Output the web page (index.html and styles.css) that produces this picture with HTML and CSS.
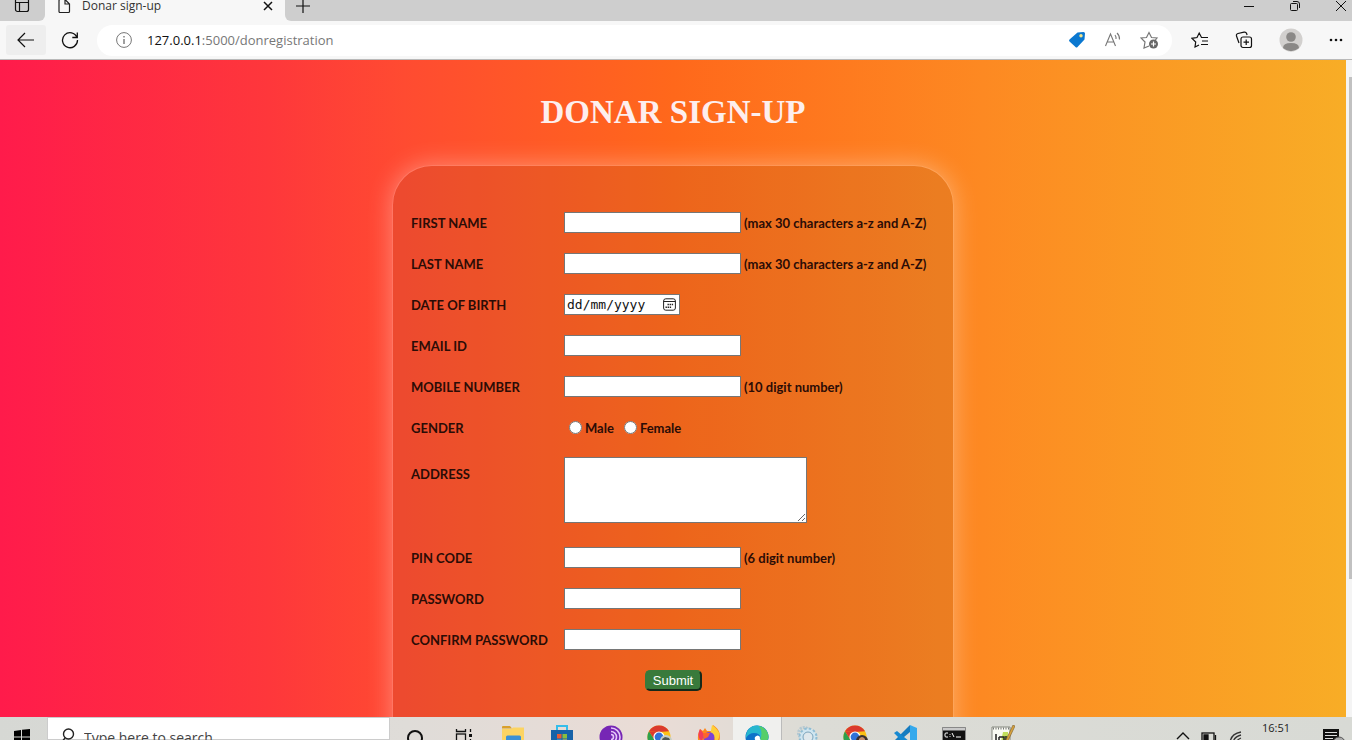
FILE: index.html
```html
<!DOCTYPE html>
<html lang="en">
<head>
<meta charset="utf-8">
<title>Donar sign-up</title>
<link rel="stylesheet" href="styles.css">
</head>
<body>
<svg class="defs" aria-hidden="true">
  <defs>
    <symbol id="chrome" viewBox="0 0 24 24">
      <circle cx="12" cy="12" r="11.500" fill="#fbc116"/>
      <path d="M2 6.200A11.500 11.500 0 0 1 22 6.200L12 7z" fill="#db3a2e"/>
      <path d="M2 6.200A11.500 11.500 0 0 0 11 23.500L15 16L7 14z" fill="#2da04e"/>
      <path d="M2 6.200L7 14L12 6.500z" fill="#db3a2e"/>
      <circle cx="12" cy="12" r="5.600" fill="#fff"/>
      <circle cx="12" cy="12" r="4.400" fill="#2f72d9"/>
    </symbol>
  </defs>
</svg>

<header class="browser">
  <div class="tabs">
    <button class="tab-actions" aria-label="Tab actions">
      <svg width="16" height="16" viewBox="0 0 16 16" fill="none" stroke="#111" stroke-width="1.200"><rect x="1.500" y="1.500" width="13" height="13" rx="2"/><path d="M1.500 5.500h13M5.500 5.500v9"/></svg>
    </button>
    <div class="tab">
      <svg width="14" height="16" viewBox="0 0 14 16" fill="none" stroke="#222" stroke-width="1.200"><path d="M3 1.500h5l4.500 4.500v7.500a1 1 0 0 1-1 1h-8.500a1 1 0 0 1-1-1v-11a1 1 0 0 1 1-1zM8 1.500v4.500h4.500"/></svg>
      <span class="tab-title">Donar sign-up</span>
      <button class="plain" aria-label="Close tab"><svg width="10" height="10" viewBox="0 0 10 10" stroke="#111" stroke-width="1.500"><path d="M1 1l8 8M9 1l-8 8"/></svg></button>
    </div>
    <div class="strip">
      <button class="plain" aria-label="New tab"><svg width="14" height="14" viewBox="0 0 14 14" stroke="#111" stroke-width="1.200"><path d="M7 0v14M0 7h14"/></svg></button>
      <div class="window">
        <button class="plain" aria-label="Minimize"><svg width="12" height="12" viewBox="0 0 12 12" stroke="#111"><path d="M1 6.500h10"/></svg></button>
        <button class="plain" aria-label="Restore"><svg width="12" height="12" viewBox="0 0 12 12" fill="none" stroke="#111"><rect x="1.500" y="3.500" width="7" height="7" rx="1"/><path d="M4 1.500h4a2.500 2.500 0 0 1 2.500 2.500v4"/></svg></button>
        <button class="plain" aria-label="Close"><svg width="12" height="12" viewBox="0 0 12 12" stroke="#111"><path d="M1 1l10 10M11 1l-10 10"/></svg></button>
      </div>
    </div>
  </div>
  <div class="toolbar">
    <button class="back" aria-label="Back"><svg width="18" height="16" viewBox="0 0 18 16" fill="none" stroke="#111" stroke-width="1.200"><path d="M17 8h-15.500M8 1l-7 7 7 7"/></svg></button>
    <button class="plain" aria-label="Reload"><svg width="18" height="18" viewBox="0 0 18 18" fill="none" stroke="#111" stroke-width="1.300"><path d="M16 6.500A7.500 7.500 0 1 0 16.500 9M16.300 1.500v5h-5"/></svg></button>
    <div class="address">
      <svg width="16" height="16" viewBox="0 0 16 16" fill="none" stroke="#777"><circle cx="8" cy="8" r="7.400"/><path d="M8 7v5M8 4v1.400" stroke-width="1.400"/></svg>
      <a class="url" href="#"><span class="host">127.0.0.1</span>:5000/donregistration</a>
      <div class="address-icons">
        <button class="plain" aria-label="Shopping"><svg width="18" height="18" viewBox="0 0 18 18"><path d="M9.500 1.500l6-.5q1.500 0 1.500 1.500l-.5 6-7 7.500q-1 1-2 0l-6-5.500q-1-1 0-2z" fill="#0b78d0"/><circle cx="13" cy="4.800" r="1.700" fill="#f4e58a"/></svg></button>
        <button class="plain" aria-label="Read aloud"><svg width="18" height="18" viewBox="0 0 18 18" fill="none" stroke="#777" stroke-width="1.100"><path d="M1.500 15l5-12 5 12M3.500 11h6M11 4a5 5 0 0 1 1 4M13 2a8 8 0 0 1 2.500 6.500"/></svg></button>
        <button class="plain" aria-label="Add to favorites"><svg width="19" height="18" viewBox="0 0 19 18"><path d="M9 15l-5 2 1-6-4-4 5.500-.5L9 1.500 11.500 6.500l5.500.5-2 2.500" fill="none" stroke="#777" stroke-width="1.200"/><circle cx="13.500" cy="13" r="4.500" fill="#666"/><path d="M13.500 10.500v5M11 13h5" stroke="#fff" stroke-width="1.200"/></svg></button>
      </div>
    </div>
    <div class="actions">
      <button class="plain" aria-label="Favorites"><svg width="18" height="18" viewBox="0 0 18 18" fill="none" stroke="#111" stroke-width="1.200"><path d="M8 14l-4 2 .7-5L1 7.300l5-.8L8.200 2l2.300 4.500H17M11 10h6M10 13.500h7"/></svg></button>
      <button class="plain" aria-label="Collections"><svg width="18" height="18" viewBox="0 0 18 18" fill="none" stroke="#111" stroke-width="1.200"><rect x="6" y="6" width="10.500" height="10.500" rx="2"/><path d="M11.200 8.500v5.500M8.500 11.200H14M4 12L1.500 5Q1 3 3 2.500L9 1.200q2-.4 2.600 1.300l.5 1.500"/></svg></button>
      <button class="plain" aria-label="Profile"><svg width="24" height="24" viewBox="0 0 24 24"><circle cx="12" cy="12" r="11.500" fill="#d2d0ce"/><circle cx="12" cy="9" r="4.800" fill="#8a8886"/><path d="M4 20q0-5 8-5t8 5q-8 6.500-16 0z" fill="#8a8886"/></svg></button>
      <button class="plain" aria-label="Settings and more"><svg width="14" height="4" viewBox="0 0 14 4" fill="#111"><circle cx="2" cy="2" r="1.300"/><circle cx="7" cy="2" r="1.300"/><circle cx="12" cy="2" r="1.300"/></svg></button>
    </div>
  </div>
</header>

<div class="viewport">
  <main class="page">
    <h1>DONAR SIGN-UP</h1>
    <form class="card">
      <div class="row"><label for="first">FIRST NAME</label><input class="field" id="first" type="text" maxlength="30"><span class="hint">(max 30 characters a-z and A-Z)</span></div>
      <div class="row"><label for="last">LAST NAME</label><input class="field" id="last" type="text" maxlength="30"><span class="hint">(max 30 characters a-z and A-Z)</span></div>
      <div class="row"><label for="dob">DATE OF BIRTH</label>
        <div class="date"><input id="dob" type="text" placeholder="dd/mm/yyyy"><button class="plain" type="button" aria-label="Open calendar"><svg width="13" height="13" viewBox="0 0 13 13" fill="none" stroke="#222"><rect x=".6" y=".8" width="11.800" height="11.400" rx="2.200"/><path d="M.6 3.500h11.800"/><path d="M4.500 6.500h6M2.500 9.200h6" stroke-width="1.400" stroke-dasharray="1.400 .7"/></svg></button></div>
      </div>
      <div class="row"><label for="email">EMAIL ID</label><input class="field" id="email" type="text"></div>
      <div class="row"><label for="mobile">MOBILE NUMBER</label><input class="field" id="mobile" type="text" maxlength="10"><span class="hint">(10 digit number)</span></div>
      <div class="row" role="radiogroup" aria-labelledby="gender"><span class="name" id="gender">GENDER</span>
        <div class="choices">
          <label><input type="radio" name="gender" value="male">Male</label>
          <label><input type="radio" name="gender" value="female">Female</label>
        </div>
      </div>
      <div class="row row-tall"><label for="address">ADDRESS</label><textarea id="address"></textarea></div>
      <div class="row"><label for="pin">PIN CODE</label><input class="field" id="pin" type="text" maxlength="6"><span class="hint">(6 digit number)</span></div>
      <div class="row"><label for="password">PASSWORD</label><input class="field" id="password" type="password"></div>
      <div class="row"><label for="confirm">CONFIRM PASSWORD</label><input class="field" id="confirm" type="password"></div>
      <div class="row row-submit"><button class="submit" type="submit">Submit</button></div>
    </form>
  </main>
  <div class="scrollbar"><div class="thumb"></div></div>
</div>

<footer class="taskbar">
  <button class="start" aria-label="Start"><svg width="16" height="16" viewBox="0 0 16 16"><path d="M0 2l7-1v6.500H0zM8 .8L16 0v7.500H8zM0 8.500h7V15l-7-1zM8 8.500h8V16l-8-1z"/></svg></button>
  <label class="search"><svg width="16" height="18" viewBox="0 0 16 18" fill="none" stroke="#222" stroke-width="1.400"><circle cx="8.500" cy="6" r="5"/><path d="M5 10l-4 5"/></svg><input type="text" placeholder="Type here to search" aria-label="Type here to search"></label>
  <nav class="apps">
    <button aria-label="Cortana"><svg width="18" height="18" viewBox="0 0 18 18" fill="none" stroke="#111" stroke-width="2"><circle cx="9" cy="9" r="7"/></svg></button>
    <button aria-label="Task view"><svg width="18" height="18" viewBox="0 0 18 18" fill="none" stroke="#111" stroke-width="1.300"><path d="M1.500 0v2.500h9V0M15.500 0v3M15.500 10v8"/><rect x="1.500" y="5" width="9" height="7"/><path d="M14 6.500h3" stroke-width="3"/></svg></button>
    <button aria-label="File Explorer"><svg class="high" width="24" height="22" viewBox="0 0 24 22"><path d="M1 2q0-1 1-1h7l2 2.500H1z" fill="#d9a02c"/><path d="M1 4h9l2-1.500h11V20H1z" fill="#fcd462"/><path d="M5 12q0-1.500 1.500-1.500h12Q20 10.500 20 12v8H5z" fill="#3b91d5"/></svg></button>
    <button aria-label="Store"><svg class="high" width="24" height="24" viewBox="0 0 24 24"><path d="M7 5V1h10v4" fill="none" stroke="#35bdea" stroke-width="2"/><path d="M1 5h22v15q0 3-3 3H4q-3 0-3-3z" fill="#1762a8"/><path d="M7 9h4.500v4.500H7z" fill="#e85b35"/><path d="M12.500 9H17v4.500h-4.500z" fill="#88be3f"/><path d="M7 14.500h4.500V19H7z" fill="#38b1e6"/><path d="M12.500 14.500H17V19h-4.500z" fill="#f4c63c"/></svg></button>
    <button aria-label="Tor Browser"><svg class="high" width="24" height="24" viewBox="0 0 24 24"><circle cx="12" cy="12" r="11.500" fill="#7626b5"/><path d="M12 3a9 9 0 0 1 0 18M12 6.500a5.500 5.500 0 0 1 0 11M12 9.500a2.500 2.500 0 0 1 0 5" fill="none" stroke="#e4c5f8" stroke-width="1.600"/></svg></button>
    <button aria-label="Google Chrome"><svg class="high" width="26" height="24" viewBox="0 0 26 24"><use href="#chrome" x="0" y="0" width="24" height="24"/><circle cx="19" cy="16" r="6" fill="#c5cdc5"/><path d="M15 14l3-2 4 1 2 4-5-1-2 3z" fill="#4e5651"/></svg></button>
    <button aria-label="Firefox"><svg class="high" width="24" height="24" viewBox="0 0 24 24"><path d="M3 4l3 2 2-3 2 3 5 0 1-6q5 3 6.500 8 2 10-6 14-7 3-13-2-5-6-.5-16z" fill="#ff8a1d"/><path d="M15 0q6 4 7.500 9 0 5-3 8-4-7-6-9z" fill="#ffcf38"/><path d="M3 4l4 5-2 7q-6-4-2-12z" fill="#f23e5a"/><circle cx="12" cy="12.500" r="5.500" fill="#7c43d5"/><path d="M6 8h7l-2 4-4 2z" fill="#ff652b"/></svg></button>
    <button class="active" aria-label="Microsoft Edge"><svg class="high" width="24" height="24" viewBox="0 0 24 24"><circle cx="12" cy="12" r="11.500" fill="#0d72c9"/><path d="M1 10Q3 .5 12 .5T23.500 12q0 4-5 4-4 0-3-3Q15 8 9 8q-5 0-8 5z" fill="#27b7cf"/><path d="M14 1q9 2 9.500 11 0 4-5 4-4 0-3-3Q18 7 14 1z" fill="#55ce69"/><path d="M10 12q3-3 5 0-1 3 3 4h-6q-3-1-2-4z" fill="#fff"/></svg></button>
    <button aria-label="Services"><svg class="high" width="24" height="24" viewBox="0 0 24 24" fill="none"><circle cx="9" cy="8" r="5.500" stroke="#b5c8d1" stroke-width="3" stroke-dasharray="2 1"/><circle cx="13" cy="12" r="6.500" fill="#dfe8ec" stroke="#cfe6f1" stroke-width="4"/><circle cx="13" cy="12" r="8.500" stroke="#8fbdd4" stroke-width="2" stroke-dasharray="2.500 2"/><circle cx="13" cy="12" r="5" stroke="#7fa5bb"/></svg></button>
    <button aria-label="Google Chrome profile"><svg class="high" width="26" height="24" viewBox="0 0 26 24"><use href="#chrome" x="0" y="0" width="24" height="24"/><circle cx="19" cy="16" r="6" fill="#39302f"/><path d="M16 14q3-4 6 0v4h-6z" fill="#c58e70"/></svg></button>
    <button aria-label="Visual Studio Code"><svg class="high" width="24" height="24" viewBox="0 0 24 24"><path d="M17 0l7 3v18l-7 3z" fill="#35a9ec"/><path d="M17 0v7L4 18l-3-2z" fill="#167cc0"/><path d="M17 24v-7L4 6 1 8z" fill="#1689d1"/></svg></button>
    <button aria-label="Command Prompt"><svg class="mid" width="24" height="20" viewBox="0 0 24 20"><path d="M.5.500h23v19H.5z" fill="#111" stroke="#888"/><path d="M1 1h22v2.500H1z" fill="#c9c9c9"/><path d="M6 6H4q-1 0-1 1v2q0 1 1 1h2M8 7v.8M8 9v.8M10 6l2 4M14 10h5" fill="none" stroke="#fff"/></svg></button>
    <button aria-label="Notepad++"><svg class="high" width="24" height="24" viewBox="0 0 24 24"><path d="M1 2h18v22H1z" fill="#f9faf2" stroke="#85887f"/><path d="M2 3.500h16" stroke="#777" stroke-dasharray="1 1.500" stroke-width="2"/><path d="M12 7h5v14h-8z" fill="#c1df5b"/><path d="M5 9v8M8 12v5M8 12h5v4M15 11v5" fill="none" stroke="#222" stroke-width="1.500"/><path d="M22 0l2 1-8 17-3 3 1-4z" fill="#d8a23c" stroke="#785c2b" stroke-width=".6"/></svg></button>
  </nav>
  <div class="tray">
    <svg width="14" height="14" viewBox="0 0 14 14" fill="none" stroke="#111" stroke-width="1.400"><path d="M1 10l6-6 6 6"/></svg>
    <svg width="16" height="14" viewBox="0 0 16 14" fill="none" stroke="#111" stroke-width="1.300"><rect x="1" y="4" width="12" height="9"/><path d="M14.500 6v5"/><path d="M3 6h4v5H3z" fill="#111"/></svg>
    <svg width="14" height="16" viewBox="0 0 14 16" fill="none" stroke="#333" stroke-width="1.300"><path d="M2 15Q2 5 13 3M5 15Q5 8 13 6M8 15q0-4 5-6"/></svg>
    <time>16:51</time>
    <svg width="24" height="20" viewBox="0 0 24 20"><path d="M2 0h16v14h-5l-3 4v-4H2z" fill="#111"/><path d="M4 3.500h12M4 6.500h12M4 9.500h8" stroke="#ddd"/><circle cx="18" cy="14" r="6" fill="#aaa" stroke="#555"/></svg>
  </div>
</footer>
</body>
</html>
```
FILE: styles.css
```css
* { box-sizing: border-box; }

body {
  margin: 0;
  height: 100vh;
  display: flex;
  flex-direction: column;
  overflow: hidden;
  font-family: "Open Sans", "Noto Sans", sans-serif;
  background: #f7f7f7;
}

button, input, textarea { font: inherit; }
svg { display: block; flex: none; }
.defs { position: absolute; width: 0; height: 0; }

button {
  border: 0;
  background: none;
  padding: 0;
}
.plain { display: flex; }

/* Browser chrome */
.browser {
  flex: none;
  border-bottom: 1px solid #b9b9b9;
  background: #f7f7f7;
}
.tabs {
  display: flex;
  height: 21px;
  overflow: hidden;
}
.tab-actions {
  width: 45px;
  padding: 0 0 8px 14px;
  display: flex;
  align-items: flex-end;
  background: #cecece;
  border-bottom-right-radius: 6px;
}
.tab {
  width: 240px;
  display: flex;
  align-items: center;
  gap: 11px;
  padding: 0 12px 10px;
}
.tab-title {
  flex: 1;
  font-size: 12px;
  line-height: 11px;
  color: #333;
}
.strip {
  flex: 1;
  display: flex;
  align-items: center;
  justify-content: space-between;
  padding: 0 5px 10px 11px;
  background: #cecece;
  border-bottom-left-radius: 6px;
}
.window { display: flex; gap: 34px; }

.toolbar {
  display: flex;
  align-items: center;
  height: 38px;
  padding: 0 9px 0 6px;
  gap: 15px;
}
.back {
  width: 40px;
  height: 30px;
  display: grid;
  place-items: center;
  background: #eee;
  border-radius: 3px;
}
.address {
  flex: 1;
  display: flex;
  align-items: center;
  gap: 15px;
  height: 31px;
  margin-left: 3px;
  padding: 0 13px 0 19px;
  background: #fff;
  border-radius: 16px;
}
.url {
  flex: 1;
  font-size: 13px;
  color: #777;
  text-decoration: none;
}
.host { color: #111; }
.address-icons { display: flex; gap: 18px; }
.actions {
  display: flex;
  align-items: center;
  gap: 26px;
  padding-left: 4px;
}

/* Page */
.viewport {
  flex: 1;
  min-height: 0;
  display: flex;
}
.page {
  flex: 1;
  overflow: hidden;
  display: flex;
  flex-direction: column;
  align-items: center;
  background: linear-gradient(to right, #ff1b4b, #fe373b 20%, #ff4b31 30%, #ff681b 50%, #fd8922 73%, #f8ad26);
}
h1 {
  flex: none;
  margin: 32px 0 33px;
  font: bold 33px/40px "Liberation Serif", serif;
  color: #fdeeee;
}
.card {
  flex: none;
  width: 562px;
  min-height: 640px;
  padding: 36px 18px;
  border: 1px solid rgba(255, 255, 255, 0.25);
  border-radius: 40px;
  background: rgba(110, 70, 30, 0.12);
  background-clip: padding-box;
  box-shadow: 0 0 25px rgba(255, 255, 255, 0.35);
  font: bold 13px/18px Lato, sans-serif;
  color: #2b0c06;
}
.row {
  display: flex;
  align-items: center;
  min-height: 41px;
}
.row > label, .name { flex: 0 0 153px; }
.field, .date, textarea {
  border: 1px solid #767676;
  background: #fff;
  border-radius: 0;
}
.field {
  width: 177px;
  height: 21px;
  padding: 1px 2px;
}
.hint { padding-left: 3px; }
.date {
  width: 116px;
  height: 21px;
  display: flex;
  align-items: center;
  padding: 0 3px 0 2px;
}
.date input {
  flex: 1;
  min-width: 0;
  padding: 0;
  border: 0;
  background: none;
  font: 13px/17px "DejaVu Sans Mono", monospace;
}
.date input::placeholder { color: #111; }
.choices { display: flex; gap: 10px; padding-left: 5px; }
.choices label { display: flex; align-items: center; gap: 3px; }
.choices input { width: 13px; height: 13px; margin: 0; }
.row-tall {
  align-items: flex-start;
  padding: 9px 0 14px;
}
.row-tall label { padding-top: 8px; }
textarea { width: 243px; height: 66px; }
.row-submit { justify-content: center; }
.submit {
  width: 57px;
  height: 21px;
  border: 2px solid;
  border-color: #397a3b #15291a #15291a #397a3b;
  border-radius: 5px;
  background: #397a3b;
  color: #fff;
  font: 13px/16px "Liberation Sans", sans-serif;
}

.scrollbar {
  width: 6px;
  padding-top: 17px;
  background: #f4f4f4;
}
.thumb {
  height: 502px;
  margin-left: 3px;
  background: #c1c1c1;
}

/* Taskbar */
.taskbar {
  flex: none;
  display: flex;
  height: 23px;
  overflow: hidden;
  background: linear-gradient(to right, #d6d8d4, #dfdcd8 30%, #eadcd6 48%, #dcdcd6 60%, #d8dad5);
}
.start {
  width: 47px;
  display: flex;
  justify-content: center;
  padding: 12px 3px 0 0;
}
.search {
  width: 343px;
  display: flex;
  align-items: flex-start;
  gap: 8px;
  padding: 10px 0 0 12px;
  background: #fff;
  border: 1px solid #ccc;
}
.search input {
  flex: 1;
  border: 0;
  padding: 0;
  background: none;
  font-size: 14px;
  line-height: 20px;
}
.search input::placeholder { color: #444; }
.apps { display: flex; flex: none; }
.apps button {
  width: 49px;
  display: flex;
  justify-content: center;
  padding-top: 12px;
}
.apps button:has(.high) { padding-top: 8px; }
.apps button:has(.mid) { padding-top: 10px; }
.apps .active {
  background: #f0f0ee;
  border-right: 1px solid #bbb;
}
.tray {
  flex: 1;
  display: flex;
  justify-content: flex-end;
  align-items: flex-start;
  gap: 11px;
  padding: 12px 7px 0 0;
}
time {
  margin: -9px 20px 0 9px;
  font-size: 11px;
  line-height: 16px;
  color: #222;
}
```
